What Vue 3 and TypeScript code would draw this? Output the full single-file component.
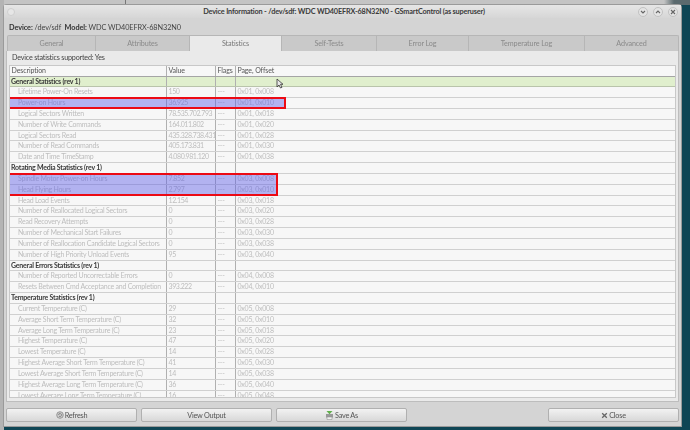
<template>
  <div class="desktop">
    <div class="behind"></div>
    <div class="window">
      <div class="titlebar">
        <span class="close-dot"></span>
        <span class="title">Device Information - /dev/sdf: WDC WD40EFRX-68N32N0 - GSmartControl (as superuser)</span>
        <div class="win-btns">
          <span class="win-btn">
            <svg width="8" height="8" viewBox="0 0 8 8"><path d="M2 3l2 2 2-2" fill="none" stroke="#666" stroke-width="1.1" /></svg>
          </span>
          <span class="win-btn">
            <svg width="8" height="8" viewBox="0 0 8 8"><path d="M2 5l2-2 2 2" fill="none" stroke="#666" stroke-width="1.1" /></svg>
          </span>
          <span class="win-btn">
            <svg width="8" height="8" viewBox="0 0 8 8"><path d="M2 2l4 4M6 2l-4 4" fill="none" stroke="#666" stroke-width="1.1" /></svg>
          </span>
        </div>
      </div>

      <div class="device"><b>Device:</b> /dev/sdf&nbsp; <b>Model:</b> WDC WD40EFRX-68N32N0</div>

      <div class="tabs">
        <div
          v-for="tab in tabs"
          :key="tab.name"
          class="tab"
          :class="{ active: tab.name === 'Statistics' }"
          :style="{ width: tab.width + 'px' }"
        >
          {{ tab.name }}
        </div>
      </div>

      <div class="pane">
        <div class="supported">Device statistics supported: Yes</div>
        <div class="table">
          <div class="row header">
            <div>Description</div>
            <div>Value</div>
            <div>Flags</div>
            <div>Page, Offset</div>
          </div>
          <div class="body">
            <div
              v-for="(row, i) in rows"
              :key="i"
              class="row"
              :class="{ section: !row.page, green: i === 0 }"
            >
              <div class="desc">{{ row.name }}</div>
              <div class="value">{{ row.value }}</div>
              <div>{{ row.page ? '---' : '' }}</div>
              <div>{{ row.page }}</div>
            </div>
          </div>
          <div class="mark mark-one"></div>
          <div class="mark mark-two"></div>
          <svg class="pointer" width="8" height="12" viewBox="0 0 8 12">
            <path d="M1 1v8l2-2 1.500 3 1.500-.7-1.500-3h2.500z" fill="#e8e8e8" stroke="#333" stroke-width=".8" />
          </svg>
        </div>
      </div>

      <div class="actions">
        <button class="btn">
          <svg width="8" height="8" viewBox="0 0 8 8">
            <circle cx="4" cy="4" r="3.300" fill="#ccc" stroke="#888" stroke-width=".8" />
            <path d="M2.500 4a1.500 1.500 0 1 1 .5 1.200" fill="none" stroke="#777" stroke-width=".8" />
          </svg>
          Refresh
        </button>
        <button class="btn">View Output</button>
        <button class="btn">
          <svg width="9" height="9" viewBox="0 0 9 9">
            <path d="M1 3h7v3.500H1z" fill="#999" />
            <path d="M2 6h5v2.500H2z" fill="#eee" stroke="#888" stroke-width=".5" />
            <path d="M1.500 0h6L4.500 3.200z" fill="#5fae4a" />
          </svg>
          Save As
        </button>
        <span class="spacer"></span>
        <button class="btn">
          <svg width="7" height="7" viewBox="0 0 7 7"><path d="M1.200 1.200l4.600 4.600M5.800 1.200L1.200 5.800" stroke="#666" stroke-width="1.300" /></svg>
          Close
        </button>
      </div>
    </div>
  </div>
</template>

<script setup lang="ts">
interface Row {
  name: string;
  value?: string;
  page?: string;
}

const tabs = [
  { name: 'General', width: 89 },
  { name: 'Attributes', width: 94 },
  { name: 'Statistics', width: 92 },
  { name: 'Self-Tests', width: 95 },
  { name: 'Error Log', width: 92 },
  { name: 'Temperature Log', width: 116 },
  { name: 'Advanced', width: 94 },
];

const rows: Row[] = [
  { name: 'General Statistics (rev 1)' },
  { name: 'Lifetime Power-On Resets', value: '150', page: '0x01, 0x008' },
  { name: 'Power-on Hours', value: '36.925', page: '0x01, 0x010' },
  { name: 'Logical Sectors Written', value: '78.535.702.793', page: '0x01, 0x018' },
  { name: 'Number of Write Commands', value: '164.011.802', page: '0x01, 0x020' },
  { name: 'Logical Sectors Read', value: '435.328.738.431', page: '0x01, 0x028' },
  { name: 'Number of Read Commands', value: '405.173.831', page: '0x01, 0x030' },
  { name: 'Date and Time TimeStamp', value: '4.080.981.120', page: '0x01, 0x038' },
  { name: 'Rotating Media Statistics (rev 1)' },
  { name: 'Spindle Motor Power-on Hours', value: '7.852', page: '0x03, 0x008' },
  { name: 'Head Flying Hours', value: '2.797', page: '0x03, 0x010' },
  { name: 'Head Load Events', value: '12.154', page: '0x03, 0x018' },
  { name: 'Number of Reallocated Logical Sectors', value: '0', page: '0x03, 0x020' },
  { name: 'Read Recovery Attempts', value: '0', page: '0x03, 0x028' },
  { name: 'Number of Mechanical Start Failures', value: '0', page: '0x03, 0x030' },
  { name: 'Number of Reallocation Candidate Logical Sectors', value: '0', page: '0x03, 0x038' },
  { name: 'Number of High Priority Unload Events', value: '95', page: '0x03, 0x040' },
  { name: 'General Errors Statistics (rev 1)' },
  { name: 'Number of Reported Uncorrectable Errors', value: '0', page: '0x04, 0x008' },
  { name: 'Resets Between Cmd Acceptance and Completion', value: '393.222', page: '0x04, 0x010' },
  { name: 'Temperature Statistics (rev 1)' },
  { name: 'Current Temperature (C)', value: '29', page: '0x05, 0x008' },
  { name: 'Average Short Term Temperature (C)', value: '32', page: '0x05, 0x010' },
  { name: 'Average Long Term Temperature (C)', value: '23', page: '0x05, 0x018' },
  { name: 'Highest Temperature (C)', value: '47', page: '0x05, 0x020' },
  { name: 'Lowest Temperature (C)', value: '14', page: '0x05, 0x028' },
  { name: 'Highest Average Short Term Temperature (C)', value: '41', page: '0x05, 0x030' },
  { name: 'Lowest Average Short Term Temperature (C)', value: '14', page: '0x05, 0x038' },
  { name: 'Highest Average Long Term Temperature (C)', value: '36', page: '0x05, 0x040' },
  { name: 'Lowest Average Long Term Temperature (C)', value: '16', page: '0x05, 0x048' },
];
</script>

<style>
html,
body {
  margin: 0;
  overflow: hidden;
}
</style>

<style scoped>
.desktop {
  width: 690px;
  height: 430px;
  box-sizing: border-box;
  padding: 5px 9px 4px 4px;
  background: linear-gradient(90deg, #b4b4b4 0, #b4b4b4 4px, #0f4655 4px);
  font-family: Lato, "Noto Sans", sans-serif;
  overflow: hidden;
  position: relative;
}

.behind {
  position: absolute;
  top: 0;
  left: 4px;
  right: 0;
  height: 5px;
  background: linear-gradient(90deg, #c4c4c4 0, #c4c4c4 121px, #777 121px, #777 122px, #c4c4c4 122px, #c4c4c4 660px, #5b6a6e 670px);
}

.window {
  position: relative;
  height: 421px;
  display: flex;
  flex-direction: column;
  background: #d4d4d4;
  box-shadow: 0 0 0 1px #9a9a9a;
  border-radius: 3px 3px 0 0;
  filter: blur(0.25px);
}

.titlebar {
  height: 13px;
  display: flex;
  align-items: center;
  justify-content: center;
  position: relative;
  background: linear-gradient(#e6e6e6, #d6d6d6);
  padding-left: 3px;
}

.title {
  font-size: 7.300px;
  font-weight: 700;
  letter-spacing: -0.17px;
  color: #3a3a3a;
  white-space: nowrap;
}

.close-dot {
  position: absolute;
  left: 3px;
  top: 3px;
  width: 6px;
  height: 6px;
  border-radius: 50%;
  background: #e6e6e6;
  border: 1px solid #cfcfcf;
}

.win-btns {
  position: absolute;
  right: 3px;
  top: 2px;
  display: flex;
  gap: 5px;
}

.win-btn {
  width: 8px;
  height: 8px;
  border-radius: 50%;
  background: #e4e4e4;
  border: 1px solid #c2c2c2;
  display: flex;
  align-items: center;
  justify-content: center;
}

.device {
  height: 13px;
  padding: 0 5px;
  font-size: 7.300px;
  letter-spacing: -0.07px;
  line-height: 20px;
  color: #444;
  white-space: nowrap;
  box-sizing: border-box;
}

.device b {
  font-weight: 700;
  color: #333;
}

.tabs {
  display: flex;
  margin: 4px 0 0 3px;
  height: 16px;
}

.tab {
  box-sizing: border-box;
  background: #c9c9c9;
  border: 1px solid #b6b6b6;
  border-left: none;
  border-bottom: none;
  font-size: 7.200px;
  letter-spacing: -0.1px;
  line-height: 15px;
  text-align: center;
  color: #8a8a8a;
}

.tab:first-child {
  border-left: 1px solid #b6b6b6;
  border-radius: 2px 0 0 0;
}

.tab:last-child {
  border-radius: 0 2px 0 0;
}

.tab.active {
  background: #eaeaea;
  color: #777;
}

.pane {
  margin: 0 2px;
  background: #eaeaea;
  border: 1px solid #bdbdbd;
  border-top: none;
  padding: 0 2px 3px 2px;
  height: 351px;
  box-sizing: border-box;
  display: flex;
  flex-direction: column;
}

.supported {
  height: 14px;
  line-height: 14px;
  padding-left: 3px;
  font-size: 7.200px;
  letter-spacing: -0.2px;
  color: #444;
}

.table {
  position: relative;
  flex: 1;
  min-height: 0;
  background: #f7f7f7;
  border: 1px solid #c8c8c8;
  overflow: hidden;
}

.row {
  display: grid;
  grid-template-columns: 157px 49px 20px 1fr;
  height: 10.830px;
  box-sizing: border-box;
  border-bottom: 1.300px solid #d0d0d0;
  font-size: 7px;
  letter-spacing: -0.23px;
  line-height: 9.500px;
  color: #bdbdbd;
  white-space: nowrap;
}

.row > div {
  padding-left: 1.500px;
  border-right: 1px solid #b0b0b0;
  overflow: hidden;
}

.row > div:last-child {
  border-right: none;
}

.row .desc {
  padding-left: 8px;
}

.row .value {
  letter-spacing: -0.42px;
}

.row.section {
  color: #3a3a3a;
  font-weight: 700;
}

.row.section .desc {
  padding-left: 1px;
}

.row.green {
  background: #e0efcd;
  border-bottom-color: #b9c4ab;
}

.header {
  height: 10.500px;
  color: #555;
  letter-spacing: -0.1px;
  border-bottom: 1px solid #a5a5a5;
}

.mark {
  position: absolute;
  box-sizing: border-box;
  border: 2px solid #ec0a14;
  background: rgba(96, 96, 232, 0.46);
}

.mark-one {
  left: -2px;
  top: 31px;
  width: 278px;
  height: 12px;
}

.mark-two {
  left: -2px;
  top: 107px;
  width: 270px;
  height: 23px;
}

.pointer {
  position: absolute;
  left: 266px;
  top: 12px;
}

.actions {
  display: flex;
  gap: 4px;
  margin-top: 6px;
  padding: 0 2px;
}

.spacer {
  flex: 1;
}

.btn {
  width: 131px;
  height: 14px;
  padding: 0;
  display: flex;
  align-items: center;
  justify-content: center;
  gap: 1px;
  font-family: inherit;
  font-size: 7.300px;
  letter-spacing: -0.25px;
  color: #555;
  background: linear-gradient(#f2f2f2, #d8d8d8);
  border: 1px solid #b0b0b0;
  border-radius: 2px;
}
</style>
